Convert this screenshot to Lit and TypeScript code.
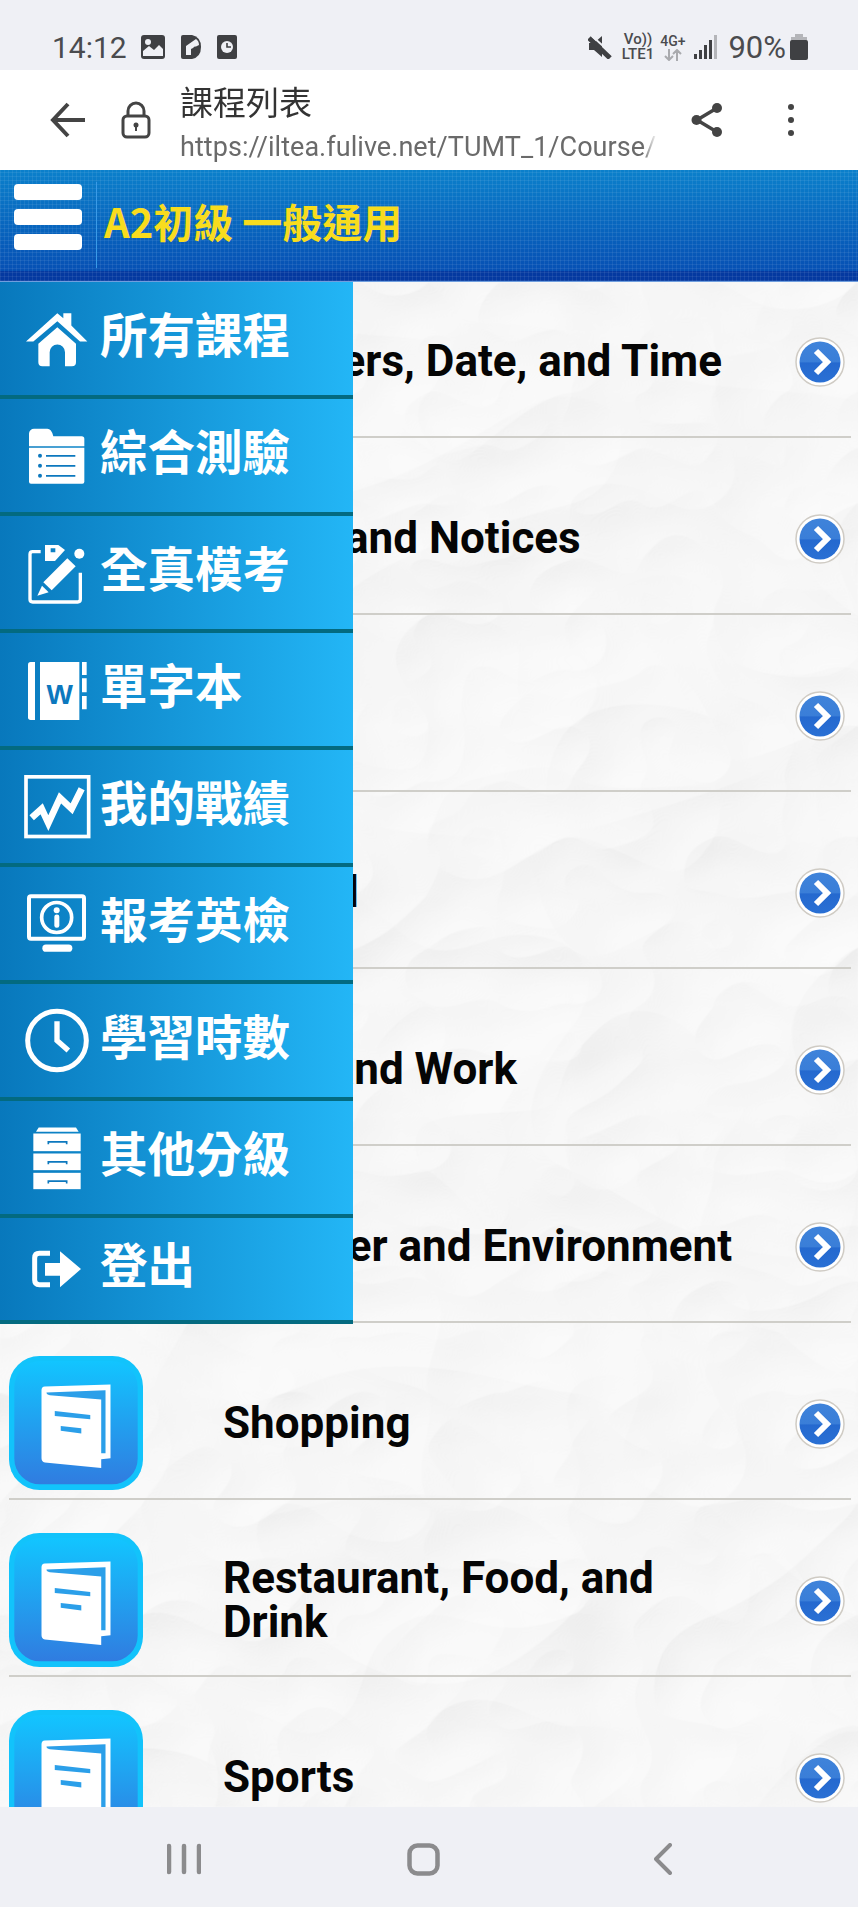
import { LitElement, html, css, svg } from 'lit';
import { customElement } from 'lit/decorators.js';

const COURSES = [
  'Numbers, Date, and Time',
  'Signs and Notices',
  'Home',
  'School',
  'Jobs and Work',
  'Weather and Environment',
  'Shopping',
  'Restaurant, Food, and Drink',
  'Sports',
];

const BLUE = '#0c78be';

// each menu icon is drawn in its own crop coordinates, hence the odd viewBoxes
const MENU = [
  {
    label: '所有課程',
    box: '57 61.5 228 228',
    icon: svg`
      <path fill="#fff" d="M78 183 L172 98 L190 113 V98 H214 V135 L262 183 H240 L172 122 L100 183 Z" />
      <path fill="#fff" d="M115 190 L172 140 L228 190 V245 a12 12 0 0 1 -12 12 H195 V215 a23 23 0 0 0 -46 0 V257 H127 a12 12 0 0 1 -12 -12 Z" />`,
  },
  {
    label: '綜合測驗',
    box: '57 412.5 228 228',
    icon: svg`
      <path fill="#fff" d="M87 460 a15 15 0 0 1 15 -15 h40 q12 0 18 22 h85 q8 0 8 8 v22 H87 Z" />
      <path fill="#fff" d="M87 502 H253 V604 q0 6 -6 6 H93 q-6 0 -6 -6 Z" />
      <circle cx="120" cy="526" r="6" fill="${BLUE}" />
      <circle cx="120" cy="556" r="6" fill="${BLUE}" />
      <circle cx="120" cy="586" r="6" fill="${BLUE}" />
      <path stroke="${BLUE}" stroke-width="5" d="M138 526 H226 M138 556 H226 M138 586 H226" />`,
  },
  {
    label: '全真模考',
    box: '27 12 228 228',
    icon: svg`
      <path fill="none" stroke="#fff" stroke-width="10" d="M92 62 H68 q-8 0 -8 8 V205 q0 8 8 8 H203 q8 0 8 -8 V125" />
      <path fill="#fff" fill-rule="evenodd" d="M105 42 H145 L165 57 L135 90 H105 Z M122 52 V64 H136 V52 Z" />
      <path fill="#fff" d="M172 82 L197 106 L125 178 L100 154 Z" />
      <path fill="#fff" d="M96 164 L116 184 L82 194 Z" />
      <circle cx="208" cy="68" r="15" fill="#fff" />`,
  },
  {
    label: '單字本',
    box: '57 153 228 228',
    icon: svg`
      <path fill="#fff" d="M105 183 V357 H92 q-8 0 -8 -8 V191 q0 -8 8 -8 Z" />
      <rect x="120" y="183" width="118" height="174" fill="#fff" />
      <path fill="#fff" d="M246 183 H260 V222 H246 Z M246 232 H260 V274 H246 Z M246 285 H260 V325 H246 Z" />
      <text x="179" y="310" text-anchor="middle" font-family="Liberation Sans" font-weight="700" font-size="84" fill="${BLUE}">W</text>`,
  },
  {
    label: '我的戰績',
    box: '57 505.5 228 228',
    icon: svg`
      <rect x="78" y="529" width="188" height="179" fill="none" stroke="#fff" stroke-width="11" />
      <path fill="none" stroke="#fff" stroke-width="20" d="M95 652 L125 625 L145 668 L180 592 L215 625 L245 565" />`,
  },
  {
    label: '報考英檢',
    box: '27 16.5 228 228',
    icon: svg`
      <rect x="57" y="47" width="165" height="128" rx="6" fill="none" stroke="#fff" stroke-width="12" />
      <circle cx="140" cy="111" r="45" fill="none" stroke="#fff" stroke-width="11" />
      <circle cx="140" cy="89" r="9" fill="#fff" />
      <rect x="133" y="102" width="15" height="40" rx="7" fill="#fff" />
      <rect x="97" y="192" width="90" height="22" rx="11" fill="#fff" />`,
  },
  {
    label: '學習時數',
    box: '57 70.5 228 228',
    icon: svg`
      <circle cx="171" cy="183" r="88" fill="none" stroke="#fff" stroke-width="15" />
      <path fill="none" stroke="#fff" stroke-width="16" d="M171 125 V183 L205 213" />`,
  },
  {
    label: '其他分級',
    box: '57 424.5 228 228',
    icon: svg`
      <path fill="#fff" d="M108 460 L116 447 H228 L236 460 Z" />
      <rect x="100" y="465" width="142" height="53" fill="#fff" />
      <rect x="100" y="525" width="142" height="50" fill="#fff" />
      <rect x="100" y="583" width="142" height="49" fill="#fff" />
      <path fill="none" stroke="${BLUE}" stroke-width="5" d="M145 497 V490 H200 V497 M145 557 V550 H200 V557 M145 615 V608 H200 V615" />`,
  },
  {
    label: '登出',
    box: '57 759 228 228',
    icon: svg`
      <path fill="none" stroke="#fff" stroke-width="15" d="M150 826 H118 q-14 0 -14 14 V906 q0 14 14 14 H150" />
      <path fill="#fff" d="M135 855 H180 V820 L243 873 L180 928 V893 H135 Z" />`,
  },
];

@customElement('app-root')
export class AppRoot extends LitElement {
  static styles = css`
    :host {
      display: flex;
      flex-direction: column;
      width: 858px;
      height: 1907px;
      overflow: hidden;
      font-family: 'Noto Sans CJK TC', Roboto, sans-serif;
      background: #eff0f5;
    }

    .status {
      flex: none;
      height: 70px;
      box-sizing: border-box;
      padding: 24px 50px 0 52px;
      display: flex;
      align-items: center;
      color: #4a4b4e;
      background: #eff0f5;
    }
    .clock {
      font: 400 30px Roboto, sans-serif;
      width: 89px;
    }
    .status svg {
      display: block;
      flex: none;
    }
    .spacer {
      flex: 1;
    }
    .net {
      display: flex;
      flex-direction: column;
      align-items: center;
      font: 500 15px/15px Roboto, sans-serif;
      margin: 0 6px 0 10px;
    }
    .net.g {
      font-size: 14px;
      margin: 0 9px 0 0;
    }
    .pct {
      font: 400 31px Roboto, sans-serif;
      margin: 0 4px 0 11px;
    }

    .browser {
      flex: none;
      height: 100px;
      display: flex;
      align-items: center;
      background: #fff;
    }
    .browser .back {
      margin-left: 50px;
    }
    .browser .lock {
      margin-left: 35px;
    }
    .page {
      width: 477px;
      margin-left: 29px;
      padding: 8px 0 4px;
      overflow: hidden;
      white-space: nowrap;
      -webkit-mask-image: linear-gradient(90deg, #000 97%, transparent);
      mask-image: linear-gradient(90deg, #000 97%, transparent);
    }
    .page-title {
      font-size: 33px;
      line-height: 44px;
      color: #333;
    }
    .page-url {
      margin-top: 6px;
      font: 400 27px/36px Roboto, sans-serif;
      letter-spacing: 0.05px;
      color: #6a6a6a;
    }
    .browser .share {
      margin-left: 34px;
    }
    .browser .more {
      margin-left: 64px;
    }

    .header {
      flex: none;
      height: 112px;
      box-sizing: border-box;
      display: flex;
      align-items: center;
      padding: 0 0 18px 14px;
      border-bottom: 1px solid #6f9ede;
      background:
        repeating-linear-gradient(90deg, rgba(255, 255, 255, 0.07) 0 1px, transparent 1px 4px),
        repeating-linear-gradient(0deg, rgba(255, 255, 255, 0.07) 0 1px, transparent 1px 4px),
        linear-gradient(#0b80cb, #0650b4 91%, #0439a0 91%);
    }
    .burger {
      width: 68px;
      display: flex;
      flex-direction: column;
      gap: 9px;
    }
    .burger i {
      display: block;
      height: 16px;
      border-radius: 4px;
      background: #fff;
    }
    .divider {
      width: 1px;
      height: 86px;
      margin: 17px 7px 0 14px;
      background: #3a9be8;
    }
    .header h1 {
      margin: 8px 0 0;
      font-size: 40px;
      font-weight: 700;
      line-height: 50px;
      color: #f8dc1e;
    }

    .main {
      flex: 1;
      position: relative;
      overflow: hidden;
      background: #f3f3f3;
    }
    .paper {
      position: absolute;
      inset: 0;
      width: 100%;
      height: 100%;
    }
    .list {
      position: relative;
      margin: -21px 7px 0 9px;
    }
    .row {
      height: 177px;
      box-sizing: border-box;
      padding-top: 33px;
      display: flex;
      align-items: flex-start;
      border-bottom: 2px solid #cfcec9;
    }
    .row .book {
      flex: none;
    }
    .row .name {
      width: 530px;
      height: 134px;
      margin-left: 80px;
      display: flex;
      align-items: center;
      font: 700 44px/44px Roboto, sans-serif;
      color: #050505;
    }
    .row .go {
      flex: none;
      margin: 43px 0 0 42px;
    }

    .menu {
      position: absolute;
      left: 0;
      top: 0;
      width: 353px;
    }
    .item {
      height: 117px;
      box-sizing: border-box;
      display: flex;
      align-items: center;
      padding-left: 19px;
      border-bottom: 4px solid #036a80;
      background: linear-gradient(90deg, #0878bc, #23b6f6);
    }
    .item:last-child {
      height: 106px;
    }
    .item svg {
      flex: none;
      display: block;
    }
    .item span {
      margin-left: 5px;
      font-size: 47.5px;
      font-weight: 700;
      line-height: 60px;
      color: #fff;
      position: relative;
      top: -6px;
    }

    .nav {
      flex: none;
      height: 100px;
      display: flex;
      align-items: center;
      padding-top: 4px;
      box-sizing: border-box;
      background: #eff0f5;
    }
    .nav svg {
      display: block;
    }
    .nav .recent {
      margin-left: 167px;
    }
    .nav .home {
      margin-left: 206px;
    }
    .nav .prev {
      margin-left: 214px;
    }
  `;

  private book() {
    return html`<svg class="book" width="134" height="134" viewBox="27 47 404 404">
      <rect x="27" y="47" width="404" height="404" rx="92" fill="#12c3fb" />
      <rect x="43" y="62" width="372" height="372" rx="78" fill="url(#book-bg)" />
      <path fill="#fff" d="M125 150 Q125 140 135 139 L333 133 V355 L305 358 V385 L135 368 Q125 365 125 355 Z" />
      <path fill="#2b9fe9" d="M140 157 L318 150 V340 H305 V178 L150 165 Q140 163 140 157 Z" />
      <path fill="#2b9fe9" d="M165 213 L272 225 V238 L165 228 Z M183 258 L245 265 V281 L183 272 Z" />
    </svg>`;
  }

  private arrow() {
    return html`<svg class="go" width="50" height="50" viewBox="0 0 50 50">
      <circle cx="25" cy="25" r="24" fill="#fff" stroke="#cfcbc4" stroke-width="1.5" />
      <circle cx="25" cy="25" r="20.5" fill="url(#go-bg)" />
      <path fill="none" stroke="#fff" stroke-width="6" d="M21 14 L32 25 L21 36" />
    </svg>`;
  }

  private statusBar() {
    return html`<div class="status">
      <span class="clock">14:12</span>
      <svg width="24" height="24" viewBox="0 0 24 24">
        <rect width="24" height="24" rx="3" fill="#3f4043" />
        <circle cx="7" cy="7" r="3" fill="#eff0f5" />
        <path fill="#eff0f5" d="M2 21 V16 L8 11 L13 15 L18 10 L22 14 V21 Z" />
      </svg>
      <svg style="margin-left:16px" width="20" height="24" viewBox="0 0 20 24">
        <path fill="#3f4043" d="M2 0 H11 Q20 2 20 12 Q20 22 11 24 H2 Q0 24 0 22 V2 Q0 0 2 0 Z" />
        <path fill="#eff0f5" d="M5 11 L15 4 Q18 6 18 10 L10 14 V20 H5 Z" />
        <circle cx="14" cy="13" r="1.5" fill="#3f4043" />
      </svg>
      <svg style="margin-left:16px" width="20" height="24" viewBox="0 0 20 24">
        <rect width="20" height="24" rx="2" fill="#3f4043" />
        <circle cx="10" cy="12" r="6" fill="#eff0f5" />
        <path fill="none" stroke="#3f4043" stroke-width="1.6" d="M10 8 V12 H14" />
      </svg>
      <div class="spacer"></div>
      <svg width="24" height="24" viewBox="0 0 24 24">
        <path fill="#3f4043" d="M1 8 H6 L14 1 V22 L6 15 H1 Z" />
        <path stroke="#3f4043" stroke-width="5" d="M1 3 L22 23" />
        <path stroke="#eff0f5" stroke-width="2" d="M4 1 L24 19" />
      </svg>
      <div class="net"><span>Vo))</span><span>LTE1</span></div>
      <div class="net g">
        <span>4G+</span>
        <svg width="18" height="12" viewBox="0 0 18 12">
          <path fill="none" stroke="#a9aaae" stroke-width="2" d="M5 0 V10 M1 7 L5 11 L9 7 M13 12 V2 M9 5 L13 1 L17 5" />
        </svg>
      </div>
      <svg width="23" height="24" viewBox="0 0 23 24">
        <rect x="0" y="19" width="3" height="5" fill="#3f4043" />
        <rect x="5" y="15" width="3" height="9" fill="#3f4043" />
        <rect x="10" y="10" width="3" height="14" fill="#3f4043" />
        <rect x="15" y="5" width="3" height="19" fill="#3f4043" />
        <rect x="20" y="0" width="3" height="24" fill="#b4b5b9" />
      </svg>
      <span class="pct">90%</span>
      <svg width="18" height="26" viewBox="0 0 18 26">
        <path fill="#b4b5b9" d="M5 0 H13 V3 H17 V8 H1 V3 H5 Z" />
        <rect y="6" width="18" height="20" rx="2" fill="#3f4043" />
      </svg>
    </div>`;
  }

  private browserBar() {
    return html`<div class="browser">
      <svg class="back" width="36" height="36" viewBox="0 0 36 36">
        <path fill="none" stroke="#444" stroke-width="4" d="M35 18 H3 M18 2 L3 18 L18 34" />
      </svg>
      <svg class="lock" width="30" height="38" viewBox="0 0 30 38">
        <rect x="2" y="15" width="26" height="21" rx="4" fill="none" stroke="#444" stroke-width="3" />
        <path fill="none" stroke="#444" stroke-width="3" d="M7 15 V10 a8 8 0 0 1 16 0 V15" />
        <circle cx="15" cy="24" r="2.5" fill="#444" />
        <rect x="14" y="25" width="2" height="5" fill="#444" />
      </svg>
      <div class="page">
        <div class="page-title">課程列表</div>
        <div class="page-url">https://iltea.fulive.net/TUMT_1/Course/Index</div>
      </div>
      <svg class="share" width="32" height="36" viewBox="0 0 32 36">
        <path fill="none" stroke="#444" stroke-width="3.5" d="M26 6 L6 18 L26 30" />
        <circle cx="26" cy="6" r="5" fill="#444" />
        <circle cx="5.500" cy="18" r="5" fill="#444" />
        <circle cx="26" cy="30" r="5" fill="#444" />
      </svg>
      <svg class="more" width="8" height="36" viewBox="0 0 8 36">
        <circle cx="4" cy="5" r="3" fill="#444" />
        <circle cx="4" cy="18" r="3" fill="#444" />
        <circle cx="4" cy="31" r="3" fill="#444" />
      </svg>
    </div>`;
  }

  render() {
    return html`
      ${this.statusBar()} ${this.browserBar()}
      <div class="header">
        <div class="burger"><i></i><i></i><i></i></div>
        <div class="divider"></div>
        <h1>A2初級 一般通用</h1>
      </div>
      <div class="main">
        <svg class="paper">
          <defs>
            <filter id="crumple" x="0" y="0" width="100%" height="100%">
              <feTurbulence type="turbulence" baseFrequency="0.0035 0.0045" numOctaves="3" seed="23" />
              <feDiffuseLighting lighting-color="#fff" surfaceScale="8" diffuseConstant="0.96">
                <feDistantLight azimuth="50" elevation="75" />
              </feDiffuseLighting>
            </filter>
            <linearGradient id="book-bg" x1="0" y1="0" x2="0" y2="1">
              <stop offset="0" stop-color="#12c5ff" />
              <stop offset="1" stop-color="#307ce0" />
            </linearGradient>
            <linearGradient id="go-bg" x1="0" y1="0" x2="0" y2="1">
              <stop offset="0" stop-color="#3f83da" />
              <stop offset="0.5" stop-color="#3a7ed8" />
              <stop offset="0.52" stop-color="#2569cf" />
              <stop offset="1" stop-color="#2a70d4" />
            </linearGradient>
          </defs>
          <rect width="100%" height="100%" filter="url(#crumple)" />
        </svg>
        <div class="list">
          ${COURSES.map(
            (name) => html`<div class="row">
              ${this.book()}
              <div class="name">${name}</div>
              ${this.arrow()}
            </div>`,
          )}
        </div>
        <div class="menu">
          ${MENU.map(
            (m) => html`<div class="item">
              <svg width="76" height="76" viewBox=${m.box}>${m.icon}</svg>
              <span>${m.label}</span>
            </div>`,
          )}
        </div>
      </div>
      <div class="nav">
        <svg class="recent" width="34" height="32" viewBox="0 0 34 32">
          <path stroke="#8b8b8d" stroke-width="4.500" stroke-linecap="round" d="M2 3 V29 M17 3 V29 M32 3 V29" />
        </svg>
        <svg class="home" width="33" height="33" viewBox="0 0 33 33">
          <rect x="2.500" y="2.500" width="28" height="28" rx="8" fill="none" stroke="#8b8b8d" stroke-width="4.500" />
        </svg>
        <svg class="prev" width="18" height="32" viewBox="0 0 18 32">
          <path fill="none" stroke="#8b8b8d" stroke-width="4" stroke-linecap="round" stroke-linejoin="round" d="M16 2 L2 16 L16 30" />
        </svg>
      </div>
    `;
  }
}
